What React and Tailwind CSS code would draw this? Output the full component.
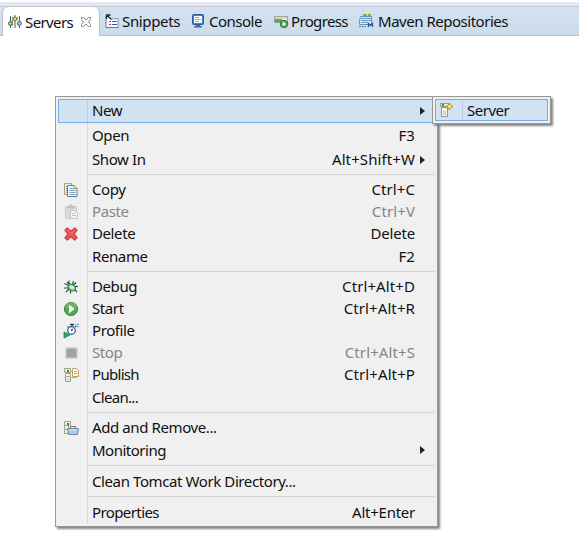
import React from 'react';

function Icon({ children }) {
  return (
    <svg width="16" height="16" viewBox="0 0 16 16" className="block shrink-0">
      {children}
    </svg>
  );
}

const ServersIcon = () => (
  <Icon>
    <path d="M3.500 2v12M8 1v13M12.500 2v12" stroke="#3d5c86" />
    <path d="M5.500 3v9M10.500 3v3" stroke="#6d8098" strokeWidth=".7" />
    <circle cx="3.500" cy="9.500" r="2" fill="#a9cf5c" stroke="#4a6b24" />
    <circle cx="8" cy="5" r="2" fill="#f5d35c" stroke="#947019" />
    <circle cx="12.300" cy="9.500" r="2" fill="#a6c8ec" stroke="#365f96" />
  </Icon>
);

const SnippetsIcon = () => (
  <Icon>
    <path d="M2 3v11.500h12V6H8" fill="#f8fbff" stroke="#66768e" />
    <path d="M3 7.500V14h10.500V6.500H8z" fill="#f8fbff" />
    <path d="M2 2h4.500M2.500 1.500V6M2.500 2l5 4.500" stroke="#17293e" strokeWidth="1.300" />
    <path d="M5 8.500h2M5 11.500h2" stroke="#b3384a" />
    <path d="M8 8.500h5M8 11.500h5" stroke="#3a589a" />
  </Icon>
);

const ConsoleIcon = () => (
  <Icon>
    <rect x="2.500" y="1.500" width="11" height="10" rx="1" fill="#4a7dbb" stroke="#2e5c9b" />
    <rect x="4" y="3" width="8" height="7" fill="#fff" />
    <path d="M5 4.500h4M5 6.500h6M5 8.500h4" stroke="#8a8fa8" strokeWidth=".8" />
    <path d="M6 12h4v1H6zM4 13h8v1.500H4z" fill="#3c6aa6" />
  </Icon>
);

const ProgressIcon = () => (
  <Icon>
    <rect x="1.500" y="3.500" width="13" height="6" fill="#fff" stroke="#a5a592" />
    <path d="M2 6h7v3.500H2z" fill="#5aa862" />
    <path d="M2 4h12v2H2z" fill="#d5dcc6" />
    <circle cx="11" cy="11" r="3.800" fill="#4fa655" stroke="#2f7d3a" />
    <path d="M9.700 8.800v4.400l3.700-2.200z" fill="#fff" />
  </Icon>
);

const MavenIcon = () => (
  <Icon>
    <path d="M2.500 3.500h11v8h-12v-4z" fill="#d5eaf7" stroke="#5d97bd" />
    <path d="M5 2h4M10 2h3" stroke="#9aaa28" strokeWidth="1.800" />
    <path d="M3 5.500h10M3 7.500h10M3 9.500h7" stroke="#6d9cc0" />
    <path d="M1 13.500h7" stroke="#397ba5" strokeDasharray="2 1" />
    <path d="M10.500 14v-3.500l2 1.800 2-1.800V14" fill="none" stroke="#205d92" strokeWidth="1.400" />
  </Icon>
);

const CopyIcon = () => (
  <Icon>
    <path d="M1.500 1.500h7v11h-7z" fill="#e6effa" stroke="#b4a070" />
    <path d="M3 4.500h3M3 6.500h3M3 8.500h3M3 10.500h3" stroke="#6d93bd" />
    <path d="M4.500 3.500h6.500l3 3v8H4.500z" fill="#f2f8ff" stroke="#5b7d9f" />
    <path d="M11 3.500v3h3" fill="#eadfba" stroke="#ad9251" />
    <path d="M6.500 6.500h4M6.500 8.500h6M6.500 10.500h6M6.500 12.500h6" stroke="#7d9fc3" />
  </Icon>
);

const PasteIcon = () => (
  <Icon>
    <rect x="2.500" y="2.500" width="11" height="12" rx="1" fill="#dcdcdc" stroke="#c6c6c6" />
    <path d="M5 4h6V2.500H9.500a1.500 1.500 0 0 0-3 0H5z" fill="#c8c8c8" stroke="#b9b9b9" />
    <path d="M7.500 6.500h4l3 3v5h-7z" fill="#f4f4f4" stroke="#c2c2c2" />
    <path d="M9 9.500h3M9 11.500h4" stroke="#c0c0c0" />
  </Icon>
);

const DeleteIcon = () => (
  <Icon>
    <path d="M2 4.300 4.300 2 8 5.200 11.700 2 14 4.300 11 8 14 11.700 11.700 14 8 10.800 4.300 14 2 11.700 5 8z" fill="#ee5555" stroke="#cf4147" strokeWidth="1.300" strokeLinejoin="round" />
    <path d="M4 4 8 7.500 12 4" fill="none" stroke="#f58582" strokeWidth=".8" />
  </Icon>
);

const DebugIcon = () => (
  <Icon>
    <path d="M6 1.500v4M10.500 2 9.500 5M1.500 4.500l5 2.500M1 9h4M3 13l3-3M7.500 11v3.500M11 10l3 3M11 7.500h4M10.500 6l2.500-2.500M4 3l3 3" stroke="#20504e" strokeWidth="1.100" />
    <ellipse cx="8.700" cy="8.500" rx="3.900" ry="2.900" transform="rotate(35 8.700 8.500)" fill="#a8d888" stroke="#2c6650" />
    <ellipse cx="9.200" cy="8.300" rx="2" ry="1.500" fill="#e4f5ad" />
  </Icon>
);

const StartIcon = () => (
  <Icon>
    <circle cx="8" cy="8" r="6.600" fill="#51a953" stroke="#3b8544" />
    <path d="M2 7a6 6 0 0 1 12 0" fill="#81bd79" opacity=".55" />
    <path d="M6 3.500v9L11.500 8z" fill="#fff" />
  </Icon>
);

const ProfileIcon = () => (
  <Icon>
    <path d="M7 1.500h4M9 1v2.500M12 4l1-1M5.500 4.500l-1-1" stroke="#1d4778" strokeWidth="1.300" />
    <circle cx="8.500" cy="7.500" r="3.800" fill="#f5fbff" stroke="#28577f" strokeWidth="1.200" />
    <path d="m8.500 8 1.500-2.500M8.500 8V6" fill="none" stroke="#28577f" />
    <path d="M12.500 1.500H16M13.500 3.500H16" stroke="#7b98b5" />
    <path d="M1 9v6L7 12z" fill="#3ca552" stroke="#247d39" strokeWidth=".8" />
  </Icon>
);

const StopIcon = () => (
  <Icon>
    <rect x="3" y="3" width="11" height="10" fill="#b5b5b5" stroke="#bdbdbd" />
    <path d="M5 5h7v6H5z" fill="#a3a3a3" stroke="#959595" />
  </Icon>
);

const PublishIcon = () => (
  <Icon>
    <path d="M1.500 1.500h6v4h-6z" fill="#e8efdb" stroke="#a0a58d" />
    <path d="M4 3h2v2H4z" fill="#2c9a43" />
    <path d="M2.500 6.500h5v8h-5z" fill="#eef1e4" stroke="#a0a58d" />
    <path d="M3 9.500h4" stroke="#9fae91" />
    <path d="M3.500 11.500h3v2h-3z" fill="#c9d3f1" />
    <path d="M9.500 4.500h-2v6h6v-2" fill="#fffbe9" stroke="#c2ad7a" />
    <path d="M9.500 1.500h4l2 2v6h-6z" fill="#fffbe9" stroke="#c0a469" />
    <path d="M11 4.500h3M11 6.500h3" stroke="#a3b5d2" />
  </Icon>
);

const AddRemoveIcon = () => (
  <Icon>
    <path d="M1.500 1.500h6v4h-6z" fill="#eaf0dd" stroke="#a0a58d" />
    <path d="M4 3h2v2H4z" fill="#2c9a43" />
    <path d="M1.500 5.500h4v8h-4z" fill="#eef1e4" stroke="#a0a58d" />
    <path d="M2 9.500h3" stroke="#a0a58d" />
    <path d="M7.500 8V6.500h5V8" fill="none" stroke="#8a744d" />
    <path d="M4.500 8.500h11l-1 6h-9z" fill="#a7c9ec" stroke="#6889ab" />
    <path d="M6 10h8" stroke="#d3e7fa" />
  </Icon>
);

const NewServerIcon = () => (
  <Icon>
    <path d="M1.500 1.500h8v3h-8z" fill="#e9f0d9" stroke="#9b997d" />
    <path d="M3 2h2v2H3z" fill="#2b9b42" />
    <path d="M2.500 5.500h6v9h-6z" fill="#f3f5eb" stroke="#9b997d" />
    <path d="M4 9h3v4H4z" fill="#ccd7f2" />
    <path d="m10.500 1 1.100 2.400L14 4.500l-2.400 1.100L10.500 8 9.400 5.600 7 4.500l2.400-1.100z" fill="#fff3a6" stroke="#b58620" />
  </Icon>
);

const Arrow = () => <span className="block h-0 w-0 border-y-[4.5px] border-l-[5px] border-y-transparent border-l-[#222]" />;

function Item({ h = 'h-[22px]', icon, label, keys, arrow, disabled, selected, t = 'tracking-[-0.4px]', k = 'tracking-[0.1px]' }) {
  return (
    <div className={`flex shrink-0 items-center ${h} ${disabled ? 'text-[#858585]' : 'text-[#101010]'} ${selected ? 'bg-[#d1e2f2] outline outline-1 -outline-offset-1 outline-[#78aee5]' : ''}`}>
      <div className={`flex h-full w-[30px] shrink-0 items-center border-r pl-[5px] ${selected ? 'border-[#bdd0e0]' : 'border-[#d7d7d7]'}`}>{icon}</div>
      <span className={`ml-1 grow pb-[2px] whitespace-nowrap ${t}`}>{label}</span>
      <span className={`pb-[2px] whitespace-nowrap ${k}`}>{keys}</span>
      <span className="ml-[5px] w-[15px] shrink-0 pb-[1px]">{arrow && <Arrow />}</span>
    </div>
  );
}

function Separator({ h, pt = 'pt-[3px]' }) {
  return (
    <div className={`flex shrink-0 ${h}`}>
      <div className="w-[30px] shrink-0 border-r border-[#d7d7d7]" />
      <div className={`grow ${pt}`}><div className="h-px bg-[#d4d4d4]" /></div>
    </div>
  );
}

function Tab({ icon, label, w, t, gap = 'gap-[2px]' }) {
  return (
    <div className={`flex shrink-0 items-center ${gap} ${w}`}>
      {icon}
      <span className={`whitespace-nowrap ${t}`}>{label}</span>
    </div>
  );
}

export default function App() {
  return (
    <div className="h-[551px] w-[579px] overflow-hidden bg-white font-['Noto_Sans','Open_Sans',sans-serif] text-[15px] leading-[20px] text-[#101010]">
      <div className="h-[6px] border-t-2 border-white bg-[#e2e6f5]" />
      <div className="flex h-[30px] border-y border-t-[#c8c8ca] border-b-[#b7bdcd] bg-gradient-to-b from-[#d4e2f0] to-[#cbdcec]">
        <div className="-mb-px ml-[2px] flex w-[98px] shrink-0 items-center gap-[2px] rounded-t-[6px] border-r border-l border-[#b9bfd0] bg-white pl-1">
          <ServersIcon />
          <span className="tracking-[-0.6px]">Servers</span>
          <svg width="12" height="12" viewBox="0 0 12 12" className="ml-[5px]">
            <path d="M1.500 1.500h2L6 4l2.500-2.500h2v2L8.500 6l2 2.500v2h-2L6 8l-2.500 2.500h-2v-2L3.500 6l-2-2.500z" fill="#fff" stroke="#858585" />
          </svg>
        </div>
        <div className="flex items-center pl-[4px]">
          <Tab w="w-[86px]" icon={<SnippetsIcon />} label="Snippets" t="tracking-[-0.35px]" />
          <Tab w="w-[83px]" gap="gap-[3px]" icon={<ConsoleIcon />} label="Console" t="tracking-[-0.5px]" />
          <Tab w="w-[85px]" icon={<ProgressIcon />} label="Progress" t="tracking-[-0.65px]" />
          <Tab w="w-[160px]" gap="gap-[4px]" icon={<MavenIcon />} label="Maven Repositories" t="tracking-[-0.48px]" />
        </div>
      </div>

      <div className="relative mt-[60px] ml-[55px] flex h-[431px] w-[383px] flex-col border border-[#979797] bg-[#f0f0f0] p-[2px] shadow-[2px_2px_2px_#858585]">
        <Item h="h-[24px]" label="New" arrow selected />
        <Item h="h-[25px]" label="Open" keys="F3" />
        <Item h="h-[24px]" label="Show In" keys="Alt+Shift+W" arrow />
        <Separator h="h-[7px]" pt="pt-[2px]" />
        <Item icon={<CopyIcon />} label="Copy" keys="Ctrl+C" />
        <Item icon={<PasteIcon />} label="Paste" keys="Ctrl+V" disabled />
        <Item icon={<DeleteIcon />} label="Delete" keys="Delete" k="tracking-[-0.2px]" />
        <Item h="h-[23px]" label="Rename" keys="F2" />
        <Separator h="h-[8px]" />
        <Item icon={<DebugIcon />} label="Debug" keys="Ctrl+Alt+D" />
        <Item icon={<StartIcon />} label="Start" keys="Ctrl+Alt+R" />
        <Item icon={<ProfileIcon />} label="Profile" />
        <Item icon={<StopIcon />} label="Stop" keys="Ctrl+Alt+S" disabled />
        <Item icon={<PublishIcon />} label="Publish" keys="Ctrl+Alt+P" t="tracking-[-0.7px]" />
        <Item h="h-[23px]" label="Clean..." t="tracking-[-0.7px]" />
        <Separator h="h-[8px]" />
        <Item icon={<AddRemoveIcon />} label="Add and Remove..." />
        <Item h="h-[23px]" label="Monitoring" arrow t="tracking-[-0.5px]" />
        <Separator h="h-[9px]" />
        <Item label="Clean Tomcat Work Directory..." />
        <Separator h="h-[9px]" />
        <Item label="Properties" keys="Alt+Enter" t="tracking-[-0.6px]" k="tracking-[-0.25px]" />

        <div className="absolute top-[-1px] left-[376px] h-[28px] w-[119px] border border-[#979797] bg-[#f0f0f0] p-[2px] shadow-[2px_2px_2px_#858585]">
          <div className="flex h-[22px] items-center border border-[#78aee5] bg-[#d1e2f2]">
            <div className="flex h-full w-[27px] items-center border-r border-[#bdd0e0] pl-[3px]"><NewServerIcon /></div>
            <span className="ml-1 tracking-[-0.5px]">Server</span>
          </div>
        </div>
      </div>
    </div>
  );
}
